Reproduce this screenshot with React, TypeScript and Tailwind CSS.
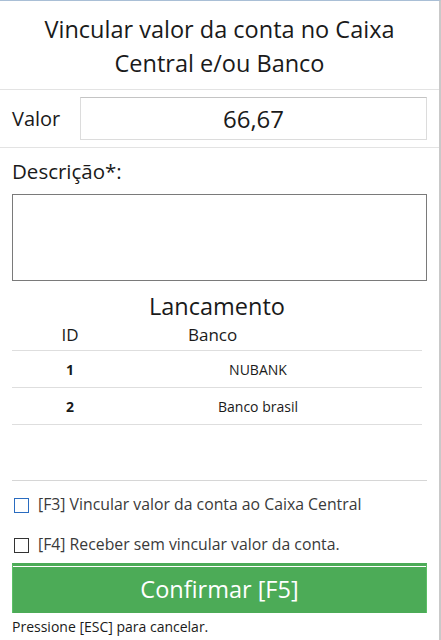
import { useState } from "react";

const bancos = [
  { id: 1, nome: "NUBANK" },
  { id: 2, nome: "Banco brasil" },
];

export default function App() {
  const [descricao, setDescricao] = useState("");
  const [caixaCentral, setCaixaCentral] = useState(false);
  const [semVincular, setSemVincular] = useState(false);

  return (
    <div
      className="w-[441px] h-[640px] bg-white text-[#1a1a1a] border-t border-[#a9bfd6] border-r-2 border-r-[#c9c9c9] flex flex-col overflow-hidden"
      style={{ fontFamily: '"Open Sans", "Noto Sans", sans-serif' }}
    >
      {/* Titulo */}
      <div className="h-[88px] flex flex-col items-center justify-center pt-[2px] text-[23.5px] leading-[34px]">
        <span>Vincular valor da conta no Caixa</span>
        <span>Central e/ou Banco</span>
      </div>
      <div className="h-px bg-[#e3e3e3]" />

      {/* Valor */}
      <div className="h-[57px] flex items-center pl-[12px] pr-[12px]">
        <span className="w-[68px] text-[20px]">Valor</span>
        <div className="flex-1 h-[43px] border border-[#dcdcdc] border-t-[#c4c4c4] flex items-center justify-center text-[24px]">
          66,67
        </div>
      </div>
      <div className="h-px bg-[#e3e3e3]" />

      {/* Descricao */}
      <div className="px-[12px] pt-[9px]">
        <div className="text-[20.5px] leading-[28px]">Descrição*:</div>
        <textarea
          value={descricao}
          onChange={(e) => setDescricao(e.target.value)}
          className="mt-[9px] w-full h-[87px] border border-[#7a7a7a] resize-none outline-none block"
        />
      </div>

      {/* Lancamento */}
      <div className="px-[12px] pr-[17px]">
        <div className="text-center text-[23.5px] leading-[30px] mt-[10px]">Lancamento</div>
        <div className="flex h-[28px] items-center text-[17px]">
          <span className="w-[116px] text-center">ID</span>
          <span className="pl-[60px]">Banco</span>
        </div>
        <div className="h-px bg-[#dedede] mt-[1px]" />
        {bancos.map((b) => (
          <div key={b.id}>
            <div className="flex h-[36px] items-center text-[14px]">
              <span className="w-[116px] text-center font-bold">{b.id}</span>
              <span className="w-[260px] text-center">{b.nome}</span>
            </div>
            <div className="h-px bg-[#dedede]" />
          </div>
        ))}
      </div>

      <div className="h-[55px]" />
      <div className="mx-[12px] h-px bg-[#d6d6d6]" />

      {/* Opcoes */}
      <div className="px-[14px] text-[15.8px] text-[#3a3a3a]">
        <label className="flex items-center h-[40px] mt-[4px] gap-[9px]">
          <input
            type="checkbox"
            checked={caixaCentral}
            onChange={(e) => setCaixaCentral(e.target.checked)}
            className="appearance-none w-[15px] h-[15px] border border-[#2a6cc0] bg-white"
          />
          [F3] Vincular valor da conta ao Caixa Central
        </label>
        <label className="flex items-center h-[38px] pt-[2px] gap-[9px]">
          <input
            type="checkbox"
            checked={semVincular}
            onChange={(e) => setSemVincular(e.target.checked)}
            className="appearance-none w-[15px] h-[15px] border border-[#333] bg-white"
          />
          [F4] Receber sem vincular valor da conta.
        </label>
      </div>

      {/* Confirmar */}
      <div className="px-[12px]">
        <button className="w-full h-[50px] bg-[#4cab57] border-t-[3px] border-x border-[#4cab57] border-x-[#5cbf67] shadow-[inset_0_1px_0_#ffffff] text-white text-[23.5px] flex items-center justify-center">
          Confirmar [F5]
        </button>
      </div>
      <div className="px-[12px] text-[14px] leading-[20px] mt-[4px]">Pressione [ESC] para cancelar.</div>
    </div>
  );
}
